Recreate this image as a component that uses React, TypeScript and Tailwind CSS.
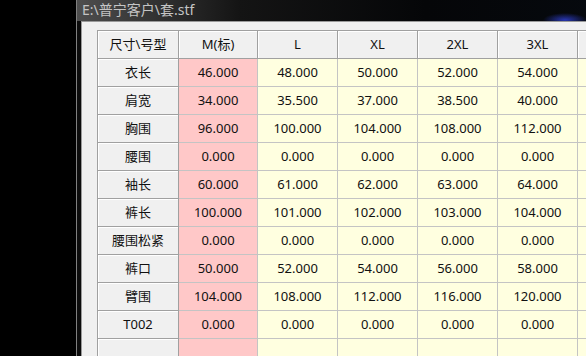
import React from 'react';

const sizes = ['M(标)', 'L', 'XL', '2XL', '3XL'];

const rows: [string, string[]][] = [
  ['衣长', ['46.000', '48.000', '50.000', '52.000', '54.000']],
  ['肩宽', ['34.000', '35.500', '37.000', '38.500', '40.000']],
  ['胸围', ['96.000', '100.000', '104.000', '108.000', '112.000']],
  ['腰围', ['0.000', '0.000', '0.000', '0.000', '0.000']],
  ['袖长', ['60.000', '61.000', '62.000', '63.000', '64.000']],
  ['裤长', ['100.000', '101.000', '102.000', '103.000', '104.000']],
  ['腰围松紧', ['0.000', '0.000', '0.000', '0.000', '0.000']],
  ['裤口', ['50.000', '52.000', '54.000', '56.000', '58.000']],
  ['臂围', ['104.000', '108.000', '112.000', '116.000', '120.000']],
  ['T002', ['0.000', '0.000', '0.000', '0.000', '0.000']],
  ['', ['', '', '', '', '']],
];

const head =
  'h-[28px] flex items-center justify-center bg-[#f0f0f0] border-r border-b border-[#a0a0a0] shadow-[inset_1px_1px_0_#ffffff]';
const cell = 'h-[28px] flex items-center justify-center border-r border-b border-[#c4c4c4]';

export default function App() {
  return (
    <div className="flex h-[356px] w-[586px] overflow-hidden bg-black font-['Noto_Sans','Noto_Sans_CJK_SC',sans-serif] text-[13px] text-[#111]">
      <div className="w-[76px] shrink-0" />

      {/* window */}
      <div className="flex flex-1 flex-col border-l border-[#808080] bg-[#0c0c0c]">
        <div className="h-[21px] shrink-0 pl-[5px] leading-[19px] text-[14px] text-[#c4c4c4] bg-[radial-gradient(ellipse_22px_7px_at_488px_20px,#2836b0,transparent),linear-gradient(to_right,#4e4e4e,#141414_28%,#050608_60%,#060a10)]">
          E:\普宁客户\套.stf
        </div>

        <div className="ml-[4px] flex-1 border-l border-t border-[#9a9a9a] bg-[#f0f0f0] pl-[15px] pt-[8px]">
          <div className="grid grid-cols-[81px_79px_80px_80px_80px_80px_80px] border-l border-t border-[#a0a0a0]">
            <div className={head}>尺寸\号型</div>
            {sizes.map((s) => (
              <div key={s} className={head}>
                {s}
              </div>
            ))}
            <div className={head} />

            {rows.map(([name, vals], i) => (
              <React.Fragment key={i}>
                <div className={head}>{name}</div>
                {vals.map((v, j) => (
                  <div key={j} className={`${cell} ${j === 0 ? 'bg-[#ffc8c8]' : 'bg-[#ffffe0]'}`}>
                    {v}
                  </div>
                ))}
                <div className={`${cell} bg-[#ffffe0]`} />
              </React.Fragment>
            ))}
          </div>
        </div>
      </div>
    </div>
  );
}
